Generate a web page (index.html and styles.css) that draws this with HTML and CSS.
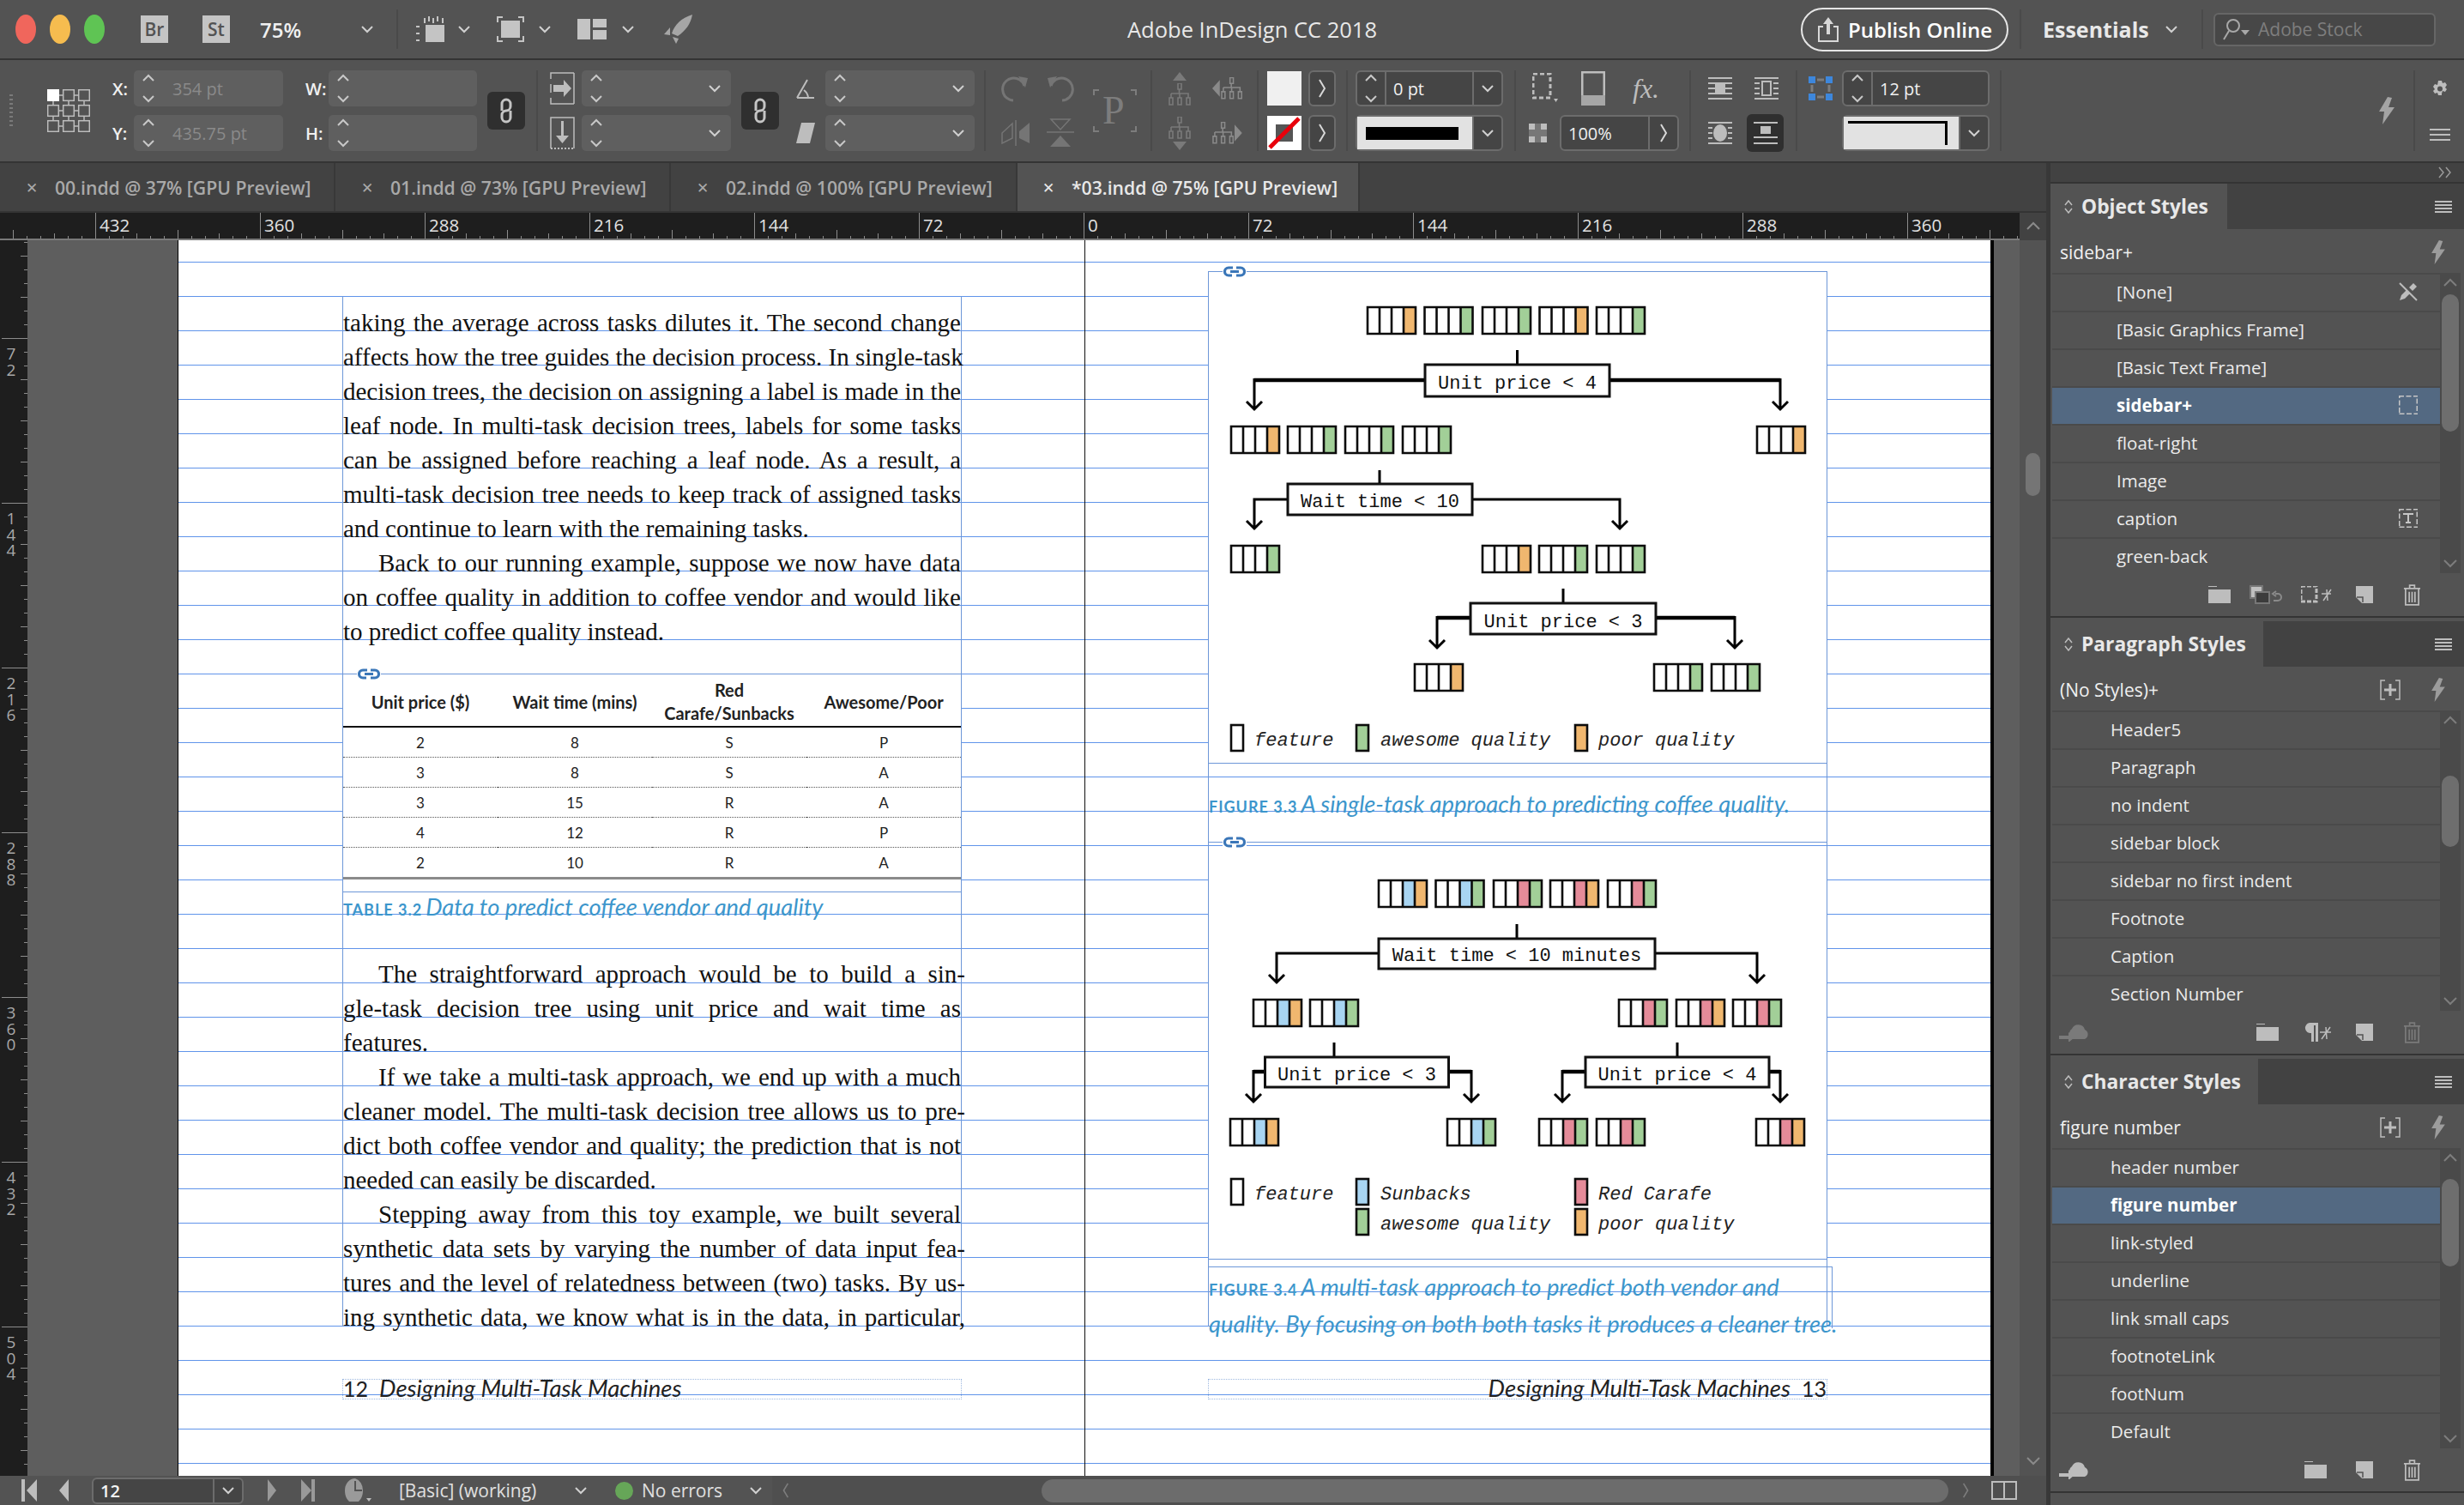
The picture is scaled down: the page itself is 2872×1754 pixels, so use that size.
FILE: index.html
```html
<!DOCTYPE html>
<html>
<head>
<title>Adobe InDesign CC 2018</title>
<link rel="stylesheet" href="styles.css">
</head>
<body>

<svg class="defs" xmlns="http://www.w3.org/2000/svg">
  <defs>
    <symbol id="chev" viewBox="0 0 14 9"><path d="M1 1l6 6 6-6" fill="none" stroke="currentColor" stroke-width="2"/></symbol>
    <symbol id="chev-r" viewBox="0 0 9 22"><path d="M1 1l6 10-6 10" fill="none" stroke="currentColor" stroke-width="2"/></symbol>
    <symbol id="spin" viewBox="0 0 16 34"><path d="M2 8l6-6 6 6M2 26l6 6 6-6" fill="none" stroke="currentColor" stroke-width="2"/></symbol>
    <symbol id="bolt" viewBox="0 0 20 32"><path d="M11 0L1 17h6L5 32 19 12h-7l4-11z" fill="currentColor"/></symbol>
    <symbol id="menu" viewBox="0 0 20 14"><path d="M0 1h20M0 5h20M0 9h20M0 13h20" stroke="currentColor" stroke-width="2"/></symbol>
    <symbol id="folder" viewBox="0 0 26 20"><path d="M0 0h10v1H0zM0 4h26v16H0z" fill="currentColor"/></symbol>
    <symbol id="newpg" viewBox="0 0 20 20"><path d="M0 0h20v20H7L0 13z" fill="currentColor"/><path d="M1 13h7v6" fill="none" stroke="#535353" stroke-width="1.5"/></symbol>
    <symbol id="trash" viewBox="0 0 22 26"><path d="M1 5h20M8 4V1h6v3M3 6v19h16V6M7.500 9v13M11 9v13M14.500 9v13" fill="none" stroke="currentColor" stroke-width="1.800"/></symbol>
    <symbol id="cloud" viewBox="0 0 36 22"><path d="M14 18a7 7 0 0 1 1-11 8 8 0 0 1 15 1 6 6 0 0 1 0 11H14z" fill="currentColor"/><path d="M0 15h11v-4l7 6-7 6v-4H0z" fill="currentColor"/></symbol>
    <symbol id="plusbox" viewBox="0 0 24 24"><path d="M6 1H1v22h5M18 1h5v22h-5" fill="none" stroke="currentColor" stroke-width="1.500"/><path d="M12 5v14M5 12h14" stroke="currentColor" stroke-width="3"/></symbol>
    <symbol id="chain" viewBox="0 0 18 30"><path d="M4 15V7a5 5 0 0 1 10 0v3a5 5 0 0 1-5 5M14 15v8a5 5 0 0 1-10 0v-3a5 5 0 0 1 5-5" fill="none" stroke="currentColor" stroke-width="3"/></symbol>
    <symbol id="org" viewBox="0 0 26 26"><path d="M11 0h4v7h-4zM12.500 7v5M3 12h20v5M3 12v5M13 12v5M1 17h4v8H1zM11 17h4v8h-4zM21 17h4v8h-4z" fill="none" stroke="currentColor" stroke-width="1.600"/></symbol>
    <g id="cells"><path d="M0 0h56v31H0zM14 0v31M28 0v31M42 0v31" fill="none" stroke="#0c0c0c" stroke-width="2.600"/></g>
    <g id="r-o"><rect class="c-w" width="56" height="31"/><rect class="c-o" x="42" width="14" height="31"/><use href="#cells"/></g>
    <g id="r-g"><rect class="c-w" width="56" height="31"/><rect class="c-g" x="42" width="14" height="31"/><use href="#cells"/></g>
    <g id="r-bo"><rect class="c-w" width="56" height="31"/><rect class="c-b" x="28" width="14" height="31"/><rect class="c-o" x="42" width="14" height="31"/><use href="#cells"/></g>
    <g id="r-bg"><rect class="c-w" width="56" height="31"/><rect class="c-b" x="28" width="14" height="31"/><rect class="c-g" x="42" width="14" height="31"/><use href="#cells"/></g>
    <g id="r-ro"><rect class="c-w" width="56" height="31"/><rect class="c-r" x="28" width="14" height="31"/><rect class="c-o" x="42" width="14" height="31"/><use href="#cells"/></g>
    <g id="r-rg"><rect class="c-w" width="56" height="31"/><rect class="c-r" x="28" width="14" height="31"/><rect class="c-g" x="42" width="14" height="31"/><use href="#cells"/></g>
    <symbol id="anchor" viewBox="0 0 28 13"><path d="M12 2H7a4.500 4.500 0 0 0 0 9h4M16 2h5a4.500 4.500 0 0 1 0 9h-5M9 6.500h10" fill="none" stroke="#3a76b8" stroke-width="3.200"/></symbol>
  </defs>
</svg>

<div class="app">

  <!-- title bar -->
  <header class="titlebar">
    <span class="light red"></span><span class="light yellow"></span><span class="light green"></span>
    <span class="appbox br">Br</span>
    <span class="appbox st">St</span>
    <span class="zoom">75%</span>
    <svg class="ico-chev zoom-chev"><use href="#chev"/></svg>
    <span class="tsep"></span>
    <svg class="tb-ico ti-a" width="34" height="30" viewBox="0 0 34 30"><path d="M10 8V2M15 6V0M20 8V2M25 6V0M31 8V2M0 12h4M0 20h4M0 28h4" stroke="#c4c4c4" stroke-width="2"/><rect x="11" y="10" width="22" height="20" fill="#c4c4c4"/></svg>
    <svg class="ico-chev ch-a"><use href="#chev"/></svg>
    <svg class="tb-ico ti-b" width="32" height="30" viewBox="0 0 32 30"><path d="M1 7V1h6M25 1h6v6M1 23v6h6M25 29h6v-6" fill="none" stroke="#c4c4c4" stroke-width="2"/><rect x="5" y="5" width="22" height="20" fill="#c4c4c4"/></svg>
    <svg class="ico-chev ch-b"><use href="#chev"/></svg>
    <svg class="tb-ico ti-c" width="34" height="24" viewBox="0 0 34 24"><path d="M0 0h15v24H0zM18 0h16v10H18zM18 13h16v11H18z" fill="#c4c4c4"/></svg>
    <svg class="ico-chev ch-c"><use href="#chev"/></svg>
    <svg class="tb-ico ti-d" width="34" height="34" viewBox="0 0 34 34"><path d="M33 0C20 4 12 12 9 22l7 3c9-6 15-14 17-25zM7 15L0 23l7 1zM10 26l7 2-3 6z" fill="#a6a6a6"/></svg>
    <div class="apptitle">Adobe InDesign CC 2018</div>
    <button class="publish"><svg width="26" height="30" viewBox="0 0 26 30"><path d="M7 12H2v17h22V12h-5" fill="none" stroke="#d8d8d8" stroke-width="2"/><path d="M13 1l-6 8h4v12h4V9h4z" fill="#d8d8d8"/></svg>Publish Online</button>
    <span class="tsep tsep-p"></span>
    <span class="workspace">Essentials</span>
    <svg class="ico-chev ch-w"><use href="#chev"/></svg>
    <span class="tsep tsep-s"></span>
    <div class="stock"><svg width="32" height="26" viewBox="0 0 32 26"><circle cx="13" cy="9" r="7" fill="none" stroke="#a8a8a8" stroke-width="2"/><path d="M8 15L2 25" stroke="#a8a8a8" stroke-width="2"/><path d="M22 14h10l-5 6z" fill="#a8a8a8"/></svg>Adobe Stock</div>
  </header>

  <!-- control panel -->
  <section class="controls">
    <span class="grip"></span>
    <svg class="refpoint" width="50" height="50" viewBox="0 0 50 50">
      <path d="M14 7h4M32 7h4M14 25h4M32 25h4M14 43h4M32 43h4M7 13v6M25 13v6M43 13v6M7 31v6M25 31v6M43 31v6" stroke="#bdbdbd" stroke-width="1.500"/>
      <g fill="none" stroke="#bdbdbd" stroke-width="1.500">
        <rect x="18.700" y="0.700" width="12.600" height="12.600"/><rect x="36.700" y="0.700" width="12.600" height="12.600"/>
        <rect x="0.700" y="18.700" width="12.600" height="12.600"/><rect x="18.700" y="18.700" width="12.600" height="12.600"/><rect x="36.700" y="18.700" width="12.600" height="12.600"/>
        <rect x="0.700" y="36.700" width="12.600" height="12.600"/><rect x="18.700" y="36.700" width="12.600" height="12.600"/><rect x="36.700" y="36.700" width="12.600" height="12.600"/>
      </g>
      <rect width="14" height="14" fill="#fff"/>
    </svg>

    <div class="tg tg-xy">
      <span class="lbl">X:</span>
      <div class="field"><svg class="spin"><use href="#spin"/></svg><span>354 pt</span></div>
      <span class="lbl lbl-w">W:</span>
      <div class="field"><svg class="spin"><use href="#spin"/></svg></div>
      <span class="lbl">Y:</span>
      <div class="field"><svg class="spin"><use href="#spin"/></svg><span>435.75 pt</span></div>
      <span class="lbl lbl-w">H:</span>
      <div class="field"><svg class="spin"><use href="#spin"/></svg></div>
    </div>
    <div class="linkbtn lb-1"><svg width="18" height="30"><use href="#chain"/></svg></div>
    <span class="csep cs-1"></span>

    <div class="tg tg-scale">
      <svg width="29" height="38" viewBox="0 0 29 38"><path d="M1 8V1h27v36H1V30M1 14v10" fill="none" stroke="#bdbdbd" stroke-width="1.500" stroke-dasharray="2 0"/><path d="M4 15h12v-6l9 10-9 10v-6H4z" fill="#bdbdbd"/></svg>
      <div class="field"><svg class="spin"><use href="#spin"/></svg><svg class="ico-chev f-chev"><use href="#chev"/></svg></div>
      <svg width="29" height="38" viewBox="0 0 29 38"><path d="M1 37V1h27v36" fill="none" stroke="#bdbdbd" stroke-width="1.500"/><path d="M1 37h27" stroke="#bdbdbd" stroke-width="2" stroke-dasharray="2 2"/><path d="M13 5h3v17h6l-7.500 9L7 22h6z" fill="#bdbdbd"/></svg>
      <div class="field"><svg class="spin"><use href="#spin"/></svg><svg class="ico-chev f-chev"><use href="#chev"/></svg></div>
    </div>
    <div class="linkbtn lb-2"><svg width="18" height="30"><use href="#chain"/></svg></div>

    <div class="tg tg-shear">
      <svg width="22" height="24" viewBox="0 0 22 24"><path d="M1 23L13 2M1 23h20M14 23a12 12 0 0 0-5-9" fill="none" stroke="#bdbdbd" stroke-width="2"/></svg>
      <div class="field"><svg class="spin"><use href="#spin"/></svg><svg class="ico-chev f-chev"><use href="#chev"/></svg></div>
      <svg width="22" height="24" viewBox="0 0 22 24"><path d="M6 0h16l-6 24H0z" fill="#bdbdbd"/></svg>
      <div class="field"><svg class="spin"><use href="#spin"/></svg><svg class="ico-chev f-chev"><use href="#chev"/></svg></div>
    </div>
    <span class="csep cs-2"></span>

    <div class="tg tg-rot">
      <svg width="32" height="32" viewBox="0 0 32 32"><path d="M27 13a13 13 0 1 0-13 17" fill="none" stroke="#757575" stroke-width="3" stroke-dasharray="26 0"/><path d="M20 2l11 2-3 11z" fill="#757575"/></svg>
      <svg width="32" height="32" viewBox="0 0 32 32"><path d="M5 13a13 13 0 1 1 13 17" fill="none" stroke="#757575" stroke-width="3"/><path d="M12 2L1 4l3 11z" fill="#757575"/></svg>
      <svg width="34" height="32" viewBox="0 0 34 32"><path d="M13 5L1 16v12l12-6zM17 1v30" fill="none" stroke="#757575" stroke-width="1.500"/><path d="M21 22l12 6V4L21 14z" fill="#757575"/></svg>
      <svg width="32" height="34" viewBox="0 0 32 34"><path d="M5 1h22L16 13zM0 16h32" fill="none" stroke="#757575" stroke-width="1.500"/><path d="M4 33h24L16 20z" fill="#757575"/></svg>
    </div>
    <div class="proxy">
      <svg width="51" height="50" viewBox="0 0 51 50"><path d="M1 7V1h6M44 1h6v6M1 43v6h6M44 49h6v-6" fill="none" stroke="#7d7d7d" stroke-width="2"/></svg>
      <span class="proxy-p">P</span>
    </div>
    <span class="csep cs-3"></span>

    <div class="tg tg-align">
      <div class="stack"><svg width="16" height="10" viewBox="0 0 16 10"><path d="M8 0l8 10H0z" fill="#7a7a7a"/></svg><svg width="26" height="26"><use href="#org"/></svg></div>
      <div class="stack-h"><svg width="9" height="20" viewBox="0 0 9 20"><path d="M9 0v20L0 10z" fill="#8a8a8a"/></svg><svg width="26" height="26"><use href="#org"/></svg></div>
      <div class="stack"><svg width="26" height="26"><use href="#org"/></svg><svg width="16" height="10" viewBox="0 0 16 10"><path d="M8 10L0 0h16z" fill="#7a7a7a"/></svg></div>
      <div class="stack-h"><svg width="26" height="26"><use href="#org"/></svg><svg width="9" height="20" viewBox="0 0 9 20"><path d="M0 0v20l9-10z" fill="#8a8a8a"/></svg></div>
    </div>
    <span class="csep cs-4"></span>

    <div class="tg tg-swatch">
      <span class="swatch fillsw"></span>
      <span class="arrowbtn"><svg width="9" height="22"><use href="#chev-r"/></svg></span>
      <span class="swatch strokesw"><svg width="40" height="40" viewBox="0 0 40 40"><rect x="10" y="10" width="20" height="20" fill="#555"/><path d="M3 37L37 3" stroke="#e8000b" stroke-width="5"/></svg></span>
      <span class="arrowbtn"><svg width="9" height="22"><use href="#chev-r"/></svg></span>
    </div>
    <span class="csep cs-5"></span>

    <div class="tg tg-stroke">
      <div class="bfield"><span class="spincell"><svg class="spin"><use href="#spin"/></svg></span><span class="bval">0 pt</span><span class="dropcell"><svg class="ico-chev"><use href="#chev"/></svg></span></div>
      <div class="bfield light-f"><span class="bval"><i class="weightbar"></i></span><span class="dropcell"><svg class="ico-chev"><use href="#chev"/></svg></span></div>
    </div>
    <span class="csep cs-6"></span>

    <div class="tg tg-fx">
      <div class="fx-icons">
        <svg width="30" height="36" viewBox="0 0 30 36"><path d="M1 1h20v28H1z" fill="none" stroke="#bdbdbd" stroke-width="3" stroke-dasharray="5 3"/><path d="M25 30h5l-2.500 4z" fill="#bdbdbd"/></svg>
        <svg width="28" height="40" viewBox="0 0 28 40"><rect x="1" y="1" width="26" height="30" fill="none" stroke="#bdbdbd" stroke-width="3"/><rect y="28" width="28" height="12" fill="#a6a6a6"/></svg>
        <span class="fx">fx.</span>
      </div>
      <svg width="21" height="22" viewBox="0 0 21 22"><path d="M0 0h21v22H0z" fill="#bdbdbd"/><path d="M7 0h7v7h7v8h-7v7H7v-7H0V7h7z" fill="#777"/></svg>
      <div class="bfield"><span class="bval">100%</span><span class="dropcell"><svg width="9" height="22"><use href="#chev-r"/></svg></span></div>
    </div>
    <span class="csep cs-7"></span>

    <div class="tg tg-wrap">
      <svg width="28" height="26" viewBox="0 0 28 26"><path d="M0 1h28M0 7h28M0 19h28M0 25h28M0 13h28" stroke="#bdbdbd" stroke-width="2"/><rect x="8" y="8" width="12" height="10" fill="#bdbdbd"/></svg>
      <svg width="28" height="26" viewBox="0 0 28 26"><path d="M0 1h28M0 25h28M0 7h6M22 7h6M0 13h6M22 13h6M0 19h6M22 19h6" stroke="#bdbdbd" stroke-width="2"/><rect x="9" y="5" width="10" height="16" fill="none" stroke="#bdbdbd" stroke-width="2"/></svg>
      <svg width="28" height="26" viewBox="0 0 28 26"><path d="M0 1h28M0 25h28M0 7h5M23 7h5M0 13h5M23 13h5M0 19h5M23 19h5" stroke="#bdbdbd" stroke-width="2"/><ellipse cx="14" cy="13" rx="8" ry="10" fill="#bdbdbd"/></svg>
      <span class="wrap-active"><svg width="28" height="26" viewBox="0 0 28 26"><path d="M0 1h28M0 18h28M0 25h28" stroke="#bdbdbd" stroke-width="2"/><rect x="8" y="5" width="12" height="9" fill="#bdbdbd"/></svg></span>
    </div>
    <span class="csep cs-8"></span>

    <div class="tg tg-last">
      <svg width="28" height="28" viewBox="0 0 28 28"><path d="M0 0h8v8H0zM20 0h8v8h-8zM0 20h8v8H0zM20 20h8v8h-8z" fill="#3d87dc"/><path d="M10 4h8M10 24h8M4 10v8M24 10v8" stroke="#7d7d7d" stroke-width="3"/></svg>
      <div class="bfield"><span class="spincell"><svg class="spin"><use href="#spin"/></svg></span><span class="bval">12 pt</span></div>
      <span></span>
      <div class="bfield light-f"><span class="bval"><i class="cornerline"></i></span><span class="dropcell"><svg class="ico-chev"><use href="#chev"/></svg></span></div>
    </div>
    <span class="csep cs-9"></span>

    <svg class="boltbig" width="22" height="32"><use href="#bolt"/></svg>
    <span class="csep cs-10"></span>
    <div class="gearcol">
      <svg width="20" height="20" viewBox="0 0 20 20"><path d="M8 0h4l1 3 3-1 2 3-2 3 2 2-2 3-3-1-1 3-.0 2H8l-1-3-3 1-2-3 2-2-2-3 2-3 3 1z" fill="#bdbdbd"/><circle cx="10" cy="9.500" r="3" fill="#535353"/></svg>
      <svg width="24" height="14" viewBox="0 0 24 14"><path d="M0 1h24M0 7h24M0 13h24" stroke="#bdbdbd" stroke-width="2"/></svg>
    </div>
  </section>

  <div class="main">
    <div class="docs">
      <nav class="tabs">
        <div class="tab t0"><span class="x">✕</span>00.indd @ 37% [GPU Preview]</div>
        <div class="tab t1"><span class="x">✕</span>01.indd @ 73% [GPU Preview]</div>
        <div class="tab t2"><span class="x">✕</span>02.indd @ 100% [GPU Preview]</div>
        <div class="tab active"><span class="x">✕</span>*03.indd @ 75% [GPU Preview]</div>
      </nav>

      <div class="hruler-row">
        <div class="hruler">
          <span>432</span><span>360</span><span>288</span><span>216</span><span>144</span><span>72</span><span>0</span><span>72</span><span>144</span><span>216</span><span>288</span><span>360</span>
        </div>
        <div class="ruler-end"><svg width="16" height="10" viewBox="0 0 16 10"><path d="M1 9l7-7 7 7" fill="none" stroke="#8a8a8a" stroke-width="2"/></svg></div>
      </div>

      <div class="canvas">
        <div class="vruler">
          <div class="vmark"><span>72</span></div>
          <div class="vmark"><span>144</span></div>
          <div class="vmark"><span>216</span></div>
          <div class="vmark"><span>288</span></div>
          <div class="vmark"><span>360</span></div>
          <div class="vmark"><span>432</span></div>
          <div class="vmark"><span>504</span></div>
        </div>
        <div class="pasteboard">
          <div class="page">
            <div class="spine"></div>

            <!-- left page -->
            <div class="frame col-l">
              <div class="ln">taking the average across tasks dilutes it. The second change</div>
              <div class="ln">affects how the tree guides the decision process. In single-task</div>
              <div class="ln">decision trees, the decision on assigning a label is made in the</div>
              <div class="ln">leaf node. In multi-task decision trees, labels for some tasks</div>
              <div class="ln">can be assigned before reaching a leaf node. As a result, a</div>
              <div class="ln">multi-task decision tree needs to keep track of assigned tasks</div>
              <div class="ln end">and continue to learn with the remaining tasks.</div>
              <div class="ln ind">Back to our running example, suppose we now have data</div>
              <div class="ln">on coffee quality in addition to coffee vendor and would like</div>
              <div class="ln end">to predict coffee quality instead.</div>

              <div class="tbl-frame">
                <svg class="anchor a-t"><use href="#anchor"/></svg>
                <table class="data">
                  <thead>
                    <tr><th>Unit price ($)</th><th>Wait time (mins)</th><th>Red<br>Carafe/Sunbacks</th><th>Awesome/Poor</th></tr>
                  </thead>
                  <tbody>
                    <tr><td>2</td><td>8</td><td>S</td><td>P</td></tr>
                    <tr><td>3</td><td>8</td><td>S</td><td>A</td></tr>
                    <tr><td>3</td><td>15</td><td>R</td><td>A</td></tr>
                    <tr><td>4</td><td>12</td><td>R</td><td>P</td></tr>
                    <tr><td>2</td><td>10</td><td>R</td><td>A</td></tr>
                  </tbody>
                </table>
              </div>
              <div class="tbl-cap"><b>Table 3.2</b> <i>Data to predict coffee vendor and quality</i></div>

              <div class="ln hang ind">The straightforward approach would be to build a sin-</div>
              <div class="ln">gle-task decision tree using unit price and wait time as</div>
              <div class="ln end">features.</div>
              <div class="ln ind">If we take a multi-task approach, we end up with a much</div>
              <div class="ln hang">cleaner model. The multi-task decision tree allows us to pre-</div>
              <div class="ln">dict both coffee vendor and quality; the prediction that is not</div>
              <div class="ln end">needed can easily be discarded.</div>
              <div class="ln ind">Stepping away from this toy example, we built several</div>
              <div class="ln hang">synthetic data sets by varying the number of data input fea-</div>
              <div class="ln hang">tures and the level of relatedness between (two) tasks. By us-</div>
              <div class="ln hang">ing synthetic data, we know what is in the data, in particular,</div>
            </div>

            <div class="runfoot rf-l"><span class="pnum">12</span><i>Designing Multi-Task Machines</i></div>

            <!-- right page -->
            <div class="frame col-r">
              <div class="fig fig-1">
                <svg class="anchor a-f"><use href="#anchor"/></svg>
                <svg class="tree" width="720" height="572" viewBox="1409 317 720 572">
                  <use href="#r-o" x="1594" y="358"/><use href="#r-g" x="1660.500" y="358"/><use href="#r-g" x="1728" y="358"/><use href="#r-o" x="1794.500" y="358"/><use href="#r-g" x="1861" y="358"/>
                  <path class="edge" d="M1768.500 408v17"/>
                  <path class="edge thick" d="M1661 443H1462M1876 443H2075"/>
                  <path class="edge" d="M1462 441V477M1453 468l9 9 9-9M2075 441V477M2066 468l9 9 9-9"/>
                  <rect class="node" x="1661" y="425" width="215" height="37"/>
                  <text class="nlabel" x="1768.500" y="453">Unit price &lt; 4</text>

                  <use href="#r-o" x="1435" y="497"/><use href="#r-g" x="1501" y="497"/><use href="#r-g" x="1568" y="497"/><use href="#r-g" x="1635" y="497"/>
                  <use href="#r-o" x="2048" y="497"/>
                  <path class="edge" d="M1608 548v16"/>
                  <path class="edge" d="M1501 582H1462V616M1453 607l9 9 9-9M1716 582H1888V616M1879 607l9 9 9-9"/>
                  <rect class="node" x="1501" y="564" width="215" height="36"/>
                  <text class="nlabel" x="1608.500" y="591">Wait time &lt; 10</text>

                  <use href="#r-g" x="1435" y="636"/>
                  <use href="#r-o" x="1728" y="636"/><use href="#r-g" x="1794" y="636"/><use href="#r-g" x="1861" y="636"/>
                  <path class="edge" d="M1822 686v17"/>
                  <path class="edge thick" d="M1714 720H1675M1930 720H2022"/>
                  <path class="edge" d="M1675 718V755M1666 746l9 9 9-9M2022 718V755M2013 746l9 9 9-9"/>
                  <rect class="node" x="1714" y="703" width="216" height="36"/>
                  <text class="nlabel" x="1822" y="731">Unit price &lt; 3</text>

                  <use href="#r-o" x="1649" y="774"/><use href="#r-g" x="1928" y="774"/><use href="#r-g" x="1995" y="774"/>

                  <rect class="sw c-w" x="1435" y="845" width="14" height="30"/><text class="legend" x="1462" y="869">feature</text>
                  <rect class="sw c-g" x="1581" y="845" width="14" height="30"/><text class="legend" x="1609" y="869">awesome quality</text>
                  <rect class="sw c-o" x="1836" y="845" width="14" height="30"/><text class="legend" x="1863" y="869">poor quality</text>
                </svg>
              </div>
              <div class="fig-cap cap-1"><b>Figure 3.3</b> <i>A single-task approach to predicting coffee quality.</i></div>
              <div class="fig fig-2">
                <svg class="anchor a-f"><use href="#anchor"/></svg>
                <svg class="tree" width="720" height="485" viewBox="1409 981 720 485">
                  <use href="#r-bo" x="1607" y="1025"/><use href="#r-bg" x="1673.500" y="1025"/><use href="#r-rg" x="1741" y="1025"/><use href="#r-ro" x="1807" y="1025"/><use href="#r-rg" x="1874" y="1025"/>
                  <path class="edge" d="M1768 1076v17"/>
                  <path class="edge" d="M1607 1110H1488V1144M1479 1135l9 9 9-9M1929 1110H2048V1144M2039 1135l9 9 9-9"/>
                  <rect class="node" x="1607" y="1093" width="322" height="35"/>
                  <text class="nlabel" x="1768" y="1119">Wait time &lt; 10 minutes</text>

                  <use href="#r-bo" x="1461" y="1164"/><use href="#r-bg" x="1527" y="1164"/>
                  <use href="#r-rg" x="1887" y="1164"/><use href="#r-ro" x="1954" y="1164"/><use href="#r-rg" x="2020" y="1164"/>

                  <path class="edge" d="M1555 1214v17M1955 1214v17"/>
                  <path class="edge thick" d="M1474 1248H1461M1689 1248H1715M1848 1248H1821M2062 1248H2075"/>
                  <path class="edge" d="M1461 1246V1283M1452 1274l9 9 9-9M1715 1246V1283M1706 1274l9 9 9-9M1821 1246V1283M1812 1274l9 9 9-9M2075 1246V1283M2066 1274l9 9 9-9"/>
                  <rect class="node" x="1474.500" y="1231" width="214" height="35"/>
                  <text class="nlabel" x="1581.500" y="1258">Unit price &lt; 3</text>
                  <rect class="node" x="1848" y="1231" width="214" height="35"/>
                  <text class="nlabel" x="1955" y="1258">Unit price &lt; 4</text>

                  <use href="#r-bo" x="1434" y="1303"/><use href="#r-bg" x="1687" y="1303"/><use href="#r-rg" x="1794" y="1303"/><use href="#r-rg" x="1861" y="1303"/><use href="#r-ro" x="2047" y="1303"/>

                  <rect class="sw c-w" x="1435" y="1373" width="14" height="30"/><text class="legend" x="1462" y="1397">feature</text>
                  <rect class="sw c-b" x="1581" y="1373" width="14" height="30"/><text class="legend" x="1609" y="1397">Sunbacks</text>
                  <rect class="sw c-r" x="1836" y="1373" width="14" height="30"/><text class="legend" x="1863" y="1397">Red Carafe</text>
                  <rect class="sw c-g" x="1581" y="1408" width="14" height="30"/><text class="legend" x="1609" y="1432">awesome quality</text>
                  <rect class="sw c-o" x="1836" y="1408" width="14" height="30"/><text class="legend" x="1863" y="1432">poor quality</text>
                </svg>
              </div>
              <div class="fig-cap cap-2"><b>Figure 3.4</b> <i>A multi-task approach to predict both vendor and<br>quality. By focusing on both both tasks it produces a cleaner tree.</i></div>
            </div>

            <div class="runfoot rf-r"><i>Designing Multi-Task Machines</i><span class="pnum pnum-r">13</span></div>
          </div>
        </div>
        <div class="vscroll">
          <span class="vthumb"></span>
          <svg width="16" height="10" viewBox="0 0 16 10"><path d="M1 1l7 7 7-7" fill="none" stroke="#8a8a8a" stroke-width="2"/></svg>
        </div>
      </div>

      <!-- status bar -->
      <footer class="status">
        <svg class="st-1" width="18" height="26" viewBox="0 0 18 26"><path d="M0 0h4v26H0zM18 0v26L6 13z" fill="#bdbdbd"/></svg>
        <svg class="st-2" width="11" height="26" viewBox="0 0 11 26"><path d="M11 0v26L0 13z" fill="#bdbdbd"/></svg>
        <div class="pagefield"><span>12</span><span class="pf-drop"><svg class="ico-chev"><use href="#chev"/></svg></span></div>
        <svg class="st-3" width="10" height="26" viewBox="0 0 10 26"><path d="M0 0v26l10-13z" fill="#999"/></svg>
        <svg class="st-4" width="16" height="26" viewBox="0 0 16 26"><path d="M0 0v26l12-13zM12 0h4v26h-4z" fill="#999"/></svg>
        <svg class="st-5" width="34" height="28" viewBox="0 0 34 28"><path d="M14 0a12 14 0 0 0-12 14c0 6 2 10 5 13h11c3-3 5-7 5-13A12 14 0 0 0 14 0z" fill="#9a9a9a"/><path d="M14 3v11h8" fill="none" stroke="#535353" stroke-width="2"/><path d="M27 23h6l-3 4z" fill="#bdbdbd"/></svg>
        <span class="profile">[Basic] (working)</span>
        <svg class="ico-chev st-6"><use href="#chev"/></svg>
        <span class="okdot"></span>
        <span class="errs">No errors</span>
        <svg class="ico-chev st-7"><use href="#chev"/></svg>
        <div class="hscroll">
          <svg width="9" height="18" viewBox="0 0 9 22"><path d="M8 1L2 11l6 10" fill="none" stroke="#7d7d7d" stroke-width="2"/></svg>
          <span class="hthumb"></span>
          <svg width="9" height="18" viewBox="0 0 9 22"><path d="M1 1l6 10-6 10" fill="none" stroke="#7d7d7d" stroke-width="2"/></svg>
          <svg class="splitbox" width="30" height="22" viewBox="0 0 30 22"><path d="M1 1h28v20H1zM15 1v20" fill="none" stroke="#bdbdbd" stroke-width="2"/></svg>
        </div>
      </footer>
    </div>

    <!-- panel dock -->
    <aside class="panels">
      <div class="dock-top"><svg width="16" height="14" viewBox="0 0 16 14"><path d="M1 1l5 6-5 6M9 1l5 6-5 6" fill="none" stroke="#9a9a9a" stroke-width="1.500"/></svg></div>

      <section class="panel">
        <div class="phead"><div class="ptab pt-obj"><svg class="updown" width="10" height="16" viewBox="0 0 10 16"><path d="M1 6l4-5 4 5M1 10l4 5 4-5" fill="none" stroke="#bdbdbd" stroke-width="1.500"/></svg>Object Styles</div><svg class="pmenu" width="20" height="14"><use href="#menu"/></svg></div>
        <div class="psub"><span>sidebar+</span><svg class="pbolt" width="18" height="28"><use href="#bolt"/></svg></div>
        <div class="plist">
          <div class="rows rows-obj">
            <div class="row">[None]<svg width="22" height="22" viewBox="0 0 22 22"><path d="M1 1l20 20" stroke="#bdbdbd" stroke-width="2"/><path d="M17 1l4 4-5 5-4-4zM9 9l4 4-6 6-6 2 2-6z" fill="#bdbdbd"/></svg></div>
            <div class="row">[Basic Graphics Frame]</div>
            <div class="row">[Basic Text Frame]</div>
            <div class="row sel">sidebar+<svg width="22" height="22" viewBox="0 0 22 22"><path d="M0 0h22v22H0z" fill="none" stroke="#c6c6c6" stroke-width="3" stroke-dasharray="6 2.500"/></svg></div>
            <div class="row">float-right</div>
            <div class="row">Image</div>
            <div class="row">caption<svg width="22" height="22" viewBox="0 0 22 22"><path d="M0 0h22v22H0z" fill="none" stroke="#c6c6c6" stroke-width="3" stroke-dasharray="6 2.500"/><path d="M6 7V6h10v1M11 6v10M8 16h6" fill="none" stroke="#c6c6c6" stroke-width="2"/></svg></div>
            <div class="row">green-back</div>
          </div>
          <div class="ptrack">
            <svg width="16" height="10" viewBox="0 0 16 10"><path d="M1 9l7-7 7 7" fill="none" stroke="#7d7d7d" stroke-width="2"/></svg>
            <span class="pthumb th-obj"></span>
            <svg class="track-d" width="16" height="10" viewBox="0 0 16 10"><path d="M1 1l7 7 7-7" fill="none" stroke="#7d7d7d" stroke-width="2"/></svg>
          </div>
        </div>
        <div class="pfoot">
          <svg class="tight" width="26" height="20"><use href="#folder"/></svg>
          <svg class="dim tight" width="38" height="22" viewBox="0 0 38 22"><rect x="1" y="1" width="14" height="14" fill="#c0c0c0" stroke="#777" stroke-width="2"/><rect x="7" y="8" width="16" height="13" fill="#3c3c3c" stroke="#777" stroke-width="2"/><path d="M30 10h3a4 4 0 0 1 0 8h-5M31 7l-4 3 4 3" fill="none" stroke="#8a8a8a" stroke-width="2"/></svg>
          <svg class="wide" width="36" height="20" viewBox="0 0 36 20"><path d="M0 0h18v18H0z" fill="none" stroke="#bdbdbd" stroke-width="3" stroke-dasharray="5 2"/><path d="M26 17l9-13M24 9h11M30 4l1 13" stroke="#bdbdbd" stroke-width="1.500" fill="none"/></svg>
          <svg class="newpg" width="20" height="20"><use href="#newpg"/></svg>
          <svg width="21" height="25"><use href="#trash"/></svg>
        </div>
      </section>

      <section class="panel">
        <div class="phead"><div class="ptab pt-par"><svg class="updown" width="10" height="16" viewBox="0 0 10 16"><path d="M1 6l4-5 4 5M1 10l4 5 4-5" fill="none" stroke="#bdbdbd" stroke-width="1.500"/></svg>Paragraph Styles</div><svg class="pmenu" width="20" height="14"><use href="#menu"/></svg></div>
        <div class="psub"><span>(No Styles)+</span><svg class="pplus" width="24" height="24"><use href="#plusbox"/></svg><svg class="pbolt" width="18" height="28"><use href="#bolt"/></svg></div>
        <div class="plist">
          <div class="rows">
            <div class="row">Header5</div>
            <div class="row">Paragraph</div>
            <div class="row">no indent</div>
            <div class="row">sidebar block</div>
            <div class="row">sidebar no first indent</div>
            <div class="row">Footnote</div>
            <div class="row">Caption</div>
            <div class="row">Section Number</div>
          </div>
          <div class="ptrack">
            <svg width="16" height="10" viewBox="0 0 16 10"><path d="M1 9l7-7 7 7" fill="none" stroke="#7d7d7d" stroke-width="2"/></svg>
            <span class="pthumb th-par"></span>
            <svg class="track-d" width="16" height="10" viewBox="0 0 16 10"><path d="M1 1l7 7 7-7" fill="none" stroke="#7d7d7d" stroke-width="2"/></svg>
          </div>
        </div>
        <div class="pfoot">
          <svg class="cloud dimmer" width="36" height="22"><use href="#cloud"/></svg>
          <svg class="mid" width="26" height="20"><use href="#folder"/></svg>
          <svg class="mid" width="34" height="22" viewBox="0 0 34 22"><path d="M8 0h10v22h-3V3h-2v19h-3V12a6 6 0 0 1-2-12z" fill="#bdbdbd"/><path d="M22 19l10-14M20 11h13M27 5l1 14" stroke="#bdbdbd" stroke-width="1.500" fill="none"/></svg>
          <svg class="newpg" width="20" height="20"><use href="#newpg"/></svg>
          <svg class="dimmer" width="21" height="25"><use href="#trash"/></svg>
        </div>
      </section>

      <section class="panel">
        <div class="phead"><div class="ptab pt-chr"><svg class="updown" width="10" height="16" viewBox="0 0 10 16"><path d="M1 6l4-5 4 5M1 10l4 5 4-5" fill="none" stroke="#bdbdbd" stroke-width="1.500"/></svg>Character Styles</div><svg class="pmenu" width="20" height="14"><use href="#menu"/></svg></div>
        <div class="psub"><span>figure number</span><svg class="pplus" width="24" height="24"><use href="#plusbox"/></svg><svg class="pbolt" width="18" height="28"><use href="#bolt"/></svg></div>
        <div class="plist">
          <div class="rows">
            <div class="row">header number</div>
            <div class="row sel">figure number</div>
            <div class="row">link-styled</div>
            <div class="row">underline</div>
            <div class="row">link small caps</div>
            <div class="row">footnoteLink</div>
            <div class="row">footNum</div>
            <div class="row">Default</div>
          </div>
          <div class="ptrack">
            <svg width="16" height="10" viewBox="0 0 16 10"><path d="M1 9l7-7 7 7" fill="none" stroke="#7d7d7d" stroke-width="2"/></svg>
            <span class="pthumb th-chr"></span>
            <svg class="track-d" width="16" height="10" viewBox="0 0 16 10"><path d="M1 1l7 7 7-7" fill="none" stroke="#7d7d7d" stroke-width="2"/></svg>
          </div>
        </div>
        <div class="pfoot">
          <svg class="cloud" width="36" height="22"><use href="#cloud"/></svg>
          <svg class="mid mid-w" width="26" height="20"><use href="#folder"/></svg>
          <svg class="newpg" width="20" height="20"><use href="#newpg"/></svg>
          <svg width="21" height="25"><use href="#trash"/></svg>
        </div>
      </section>
    </aside>
  </div>
</div>
</body>
</html>
```

FILE: styles.css
```css
html, body {
    margin: 0;
    height: 100%;
    overflow: hidden;
    background: #535353;
}

body {
    font-family: "Open Sans", "Liberation Sans", sans-serif;
    color: #e8e8e8;
}

.defs {
    position: absolute;
    width: 0;
    height: 0;
}

.app {
    width: 2872px;
    height: 1754px;
    display: flex;
    flex-direction: column;
}

/* title bar */
.titlebar {
    height: 68px;
    flex: none;
    display: flex;
    align-items: center;
    padding-left: 18px;
    box-sizing: border-box;
    background: #535353;
}

.light {
    width: 24px;
    height: 34px;
    border-radius: 50%;
    margin-right: 16px;
    flex: none;
}

.red { background: #f0665c; }
.yellow { background: #f6bc4f; }
.green { background: #5fc454; }

.appbox {
    width: 32px;
    height: 32px;
    flex: none;
    background: #c4c4c4;
    color: #535353;
    font-size: 21px;
    font-weight: 600;
    line-height: 32px;
    text-align: center;
}

.br { margin-left: 26px; }
.st { margin-left: 40px; }

.zoom {
    margin-left: 35px;
    width: 118px;
    font-size: 24px;
    font-weight: 600;
    color: #f0f0f0;
}

.ico-chev {
    width: 14px;
    height: 9px;
    flex: none;
    color: #d0d0d0;
}

.tsep {
    width: 2px;
    height: 46px;
    background: #4a4a4a;
    margin-left: 27px;
    flex: none;
}

.ti-a { margin-left: 21px; }
.ch-a { margin-left: 15px; }
.ti-b { margin-left: 31px; }
.ch-b { margin-left: 17px; }
.ti-c { margin-left: 31px; }
.ch-c { margin-left: 18px; }
.ti-d { margin-left: 35px; }

.apptitle {
    margin-left: 506px;
    width: 785px;
    flex: none;
    font-size: 25.500px;
    color: #e8e8e8;
}

.publish {
    width: 242px;
    height: 51px;
    flex: none;
    box-sizing: border-box;
    border: 2px solid #e6e6e6;
    border-radius: 26px;
    background: transparent;
    color: #fff;
    font-family: inherit;
    font-size: 24px;
    font-weight: 600;
    display: flex;
    align-items: center;
    justify-content: center;
    gap: 10px;
    padding: 0;
}

.tsep-p { margin-left: 13px; }

.workspace {
    margin-left: 25px;
    width: 143px;
    font-size: 25px;
    font-weight: 700;
    color: #e8e8e8;
}

.ch-w { margin-left: 0; }
.tsep-s { margin-left: 28px; }

.stock {
    margin-left: 12px;
    width: 259px;
    height: 39px;
    flex: none;
    box-sizing: border-box;
    border: 2px solid #666;
    border-radius: 6px;
    background: #474747;
    display: flex;
    align-items: center;
    gap: 10px;
    padding-left: 8px;
    font-size: 21px;
    color: #7e7e7e;
}

/* control panel */
.controls {
    height: 122px;
    flex: none;
    box-sizing: border-box;
    border-top: 2px solid #343434;
    border-bottom: 2px solid #343434;
    background: #535353;
    display: flex;
    align-items: center;
    padding-left: 11px;
}

.grip {
    width: 4px;
    height: 38px;
    flex: none;
    background: repeating-linear-gradient(#7a7a7a 0 2px, transparent 2px 5px);
}

.refpoint {
    margin-left: 40px;
    flex: none;
}

.tg {
    display: grid;
    grid-template-rows: 42px 42px;
    row-gap: 10px;
    align-items: center;
    flex: none;
}

.tg-xy { margin-left: 26px; grid-template-columns: 25px 174px 53px 173px; }
.tg-scale { margin-left: 14px; grid-template-columns: 37px 174px; }
.tg-shear { margin-left: 20px; grid-template-columns: 34px 174px; }
.tg-rot { margin-left: 18px; grid-template-columns: 53px 32px; }
.tg-align { margin-left: 19px; grid-template-columns: 51px 35px; }
.tg-swatch { margin-left: 10px; grid-template-columns: 48px 32px; }
.tg-stroke { margin-left: 9px; grid-template-columns: 172px; }
.tg-fx { margin-left: 15px; grid-template-columns: 36px 139px; }
.tg-wrap { margin-left: 20px; grid-template-columns: 45px 43px; justify-items: start; }
.tg-wrap svg:nth-child(2) { margin-left: 9px; }
.tg-last { margin-left: 13px; grid-template-columns: 39px 172px; }

.lbl {
    font-size: 20px;
    font-weight: 600;
    color: #f0f0f0;
}

.lbl-w { padding-left: 26px; }

.field {
    height: 42px;
    display: flex;
    align-items: center;
    background: #5f5f5f;
    border-radius: 5px;
    color: #8a8a8a;
    font-size: 20px;
}

.spin {
    width: 16px;
    height: 34px;
    margin: 0 20px 0 9px;
    flex: none;
    color: #c8c8c8;
}

.f-chev { margin-left: auto; margin-right: 12px; }

.linkbtn {
    width: 44px;
    height: 44px;
    flex: none;
    background: #2f2f2f;
    border-radius: 6px;
    display: flex;
    align-items: center;
    justify-content: center;
    color: #c4c4c4;
}

.lb-1 { margin-left: 12px; }
.lb-2 { margin-left: 12px; }

.csep {
    width: 2px;
    height: 94px;
    flex: none;
    background: #4a4a4a;
}

.cs-1 { margin-left: 13px; }
.cs-2 { margin-left: 11px; }
.cs-3 { margin-left: 16px; }
.cs-4 { margin-left: 17px; }
.cs-5 { margin-left: 12px; }
.cs-6 { margin-left: 13px; }
.cs-7 { margin-left: 12px; }
.cs-8 { margin-left: 14px; }
.cs-9 { margin-left: 12px; }
.cs-10 { margin-left: 20px; }

.proxy {
    position: relative;
    width: 51px;
    height: 50px;
    margin-left: 22px;
    flex: none;
}

.proxy-p {
    position: absolute;
    left: 11px;
    top: -2px;
    font-family: "Liberation Serif", serif;
    font-size: 46px;
    color: #7d7d7d;
}

.stack {
    display: flex;
    flex-direction: column;
    align-items: center;
    gap: 3px;
    width: 26px;
    color: #7a7a7a;
}

.stack-h {
    display: flex;
    align-items: center;
    gap: 1px;
    color: #8a8a8a;
}

.swatch {
    width: 40px;
    height: 40px;
    display: block;
}

.fillsw { background: #f0f0f0; }
.strokesw { background: #fff; }

.arrowbtn {
    width: 32px;
    height: 42px;
    box-sizing: border-box;
    border: 2px solid #6c6c6c;
    border-radius: 6px;
    background: #454545;
    display: flex;
    align-items: center;
    justify-content: center;
    color: #d8d8d8;
}

.bfield {
    height: 42px;
    box-sizing: border-box;
    border: 2px solid #6c6c6c;
    border-radius: 6px;
    background: #454545;
    display: flex;
    color: #f0f0f0;
    font-size: 20px;
}

.spincell {
    width: 34px;
    flex: none;
    box-sizing: border-box;
    border-right: 2px solid #6c6c6c;
    display: flex;
    align-items: center;
    justify-content: center;
}

.spincell .spin { margin: 0; }

.bval {
    flex: 1;
    display: flex;
    align-items: center;
    padding-left: 8px;
}

.dropcell {
    width: 34px;
    flex: none;
    box-sizing: border-box;
    border-left: 2px solid #6c6c6c;
    display: flex;
    align-items: center;
    justify-content: center;
    color: #d8d8d8;
}

.light-f .bval { background: #e2e2e2; }

.weightbar {
    display: block;
    width: 108px;
    height: 15px;
    background: #000;
    margin-left: 2px;
}

.cornerline {
    display: block;
    width: 116px;
    height: 28px;
    box-sizing: border-box;
    border-top: 3px solid #000;
    border-right: 3px solid #000;
    margin-left: -3px;
}

.fx-icons {
    grid-column: 1 / 3;
    display: flex;
    align-items: center;
    gap: 27px;
    padding-left: 4px;
}

.fx {
    font-family: "Liberation Serif", serif;
    font-style: italic;
    font-size: 32px;
    color: #bdbdbd;
    margin-left: 5px;
}

.wrap-active {
    width: 43px;
    height: 44px;
    background: #2f2f2f;
    border-radius: 6px;
    display: flex;
    align-items: center;
    justify-content: center;
}

.boltbig {
    margin-left: auto;
    color: #a4a4a4;
    flex: none;
}

.gearcol {
    margin-left: 17px;
    margin-right: 16px;
    height: 70px;
    flex: none;
    display: flex;
    flex-direction: column;
    align-items: center;
    justify-content: space-between;
    width: 24px;
}

/* document area */
.main {
    flex: 1;
    display: flex;
    min-height: 0;
}

.docs {
    width: 2385px;
    flex: none;
    display: flex;
    flex-direction: column;
}

.tabs {
    height: 58px;
    flex: none;
    box-sizing: border-box;
    border-bottom: 2px solid #343434;
    background: #424242;
    display: flex;
}

.tab {
    height: 56px;
    flex: none;
    box-sizing: border-box;
    border-right: 2px solid #383838;
    display: flex;
    align-items: center;
    padding-left: 30px;
    font-size: 21.200px;
    font-weight: 600;
    color: #a9a9a9;
}

.t0, .t1 { width: 391px; }
.t2 { width: 404px; }

.tab.active {
    width: 399px;
    padding-left: 29px;
    background: #535353;
    color: #e8e8e8;
}

.x {
    width: 14px;
    margin-right: 20px;
    font-size: 17px;
    font-weight: 400;
}

.hruler-row {
    height: 32px;
    flex: none;
    display: flex;
}

.hruler {
    width: 2354px;
    flex: none;
    box-sizing: border-box;
    border-bottom: 2px solid #7a7a7a;
    padding-left: 112px;
    display: flex;
    overflow: hidden;
    background-color: #1e1e1e;
    background-image:
        linear-gradient(to right, #8c8c8c 1px, transparent 1px),
        linear-gradient(to right, #8c8c8c 1px, transparent 1px),
        linear-gradient(to right, #8c8c8c 1px, transparent 1px),
        linear-gradient(to right, #8c8c8c 1px, transparent 1px);
    background-size: 192px 30px, 96px 10px, 48px 6px, 16px 3px;
    background-position: 111px bottom, 15px bottom, 15px bottom, 15px bottom;
    background-repeat: repeat-x;
}

.hruler span {
    width: 192px;
    flex: none;
    box-sizing: border-box;
    padding-left: 4px;
    font-size: 20.500px;
    line-height: 28px;
    color: #e2e2e2;
}

.ruler-end {
    flex: 1;
    background: #424242;
    display: flex;
    align-items: center;
    justify-content: center;
    border-bottom: 2px solid #424242;
}

.canvas {
    height: 1440px;
    flex: none;
    display: flex;
}

.vruler {
    width: 32px;
    flex: none;
    box-sizing: border-box;
    padding-top: 116px;
    display: flex;
    flex-direction: column;
    overflow: hidden;
    background-color: #1e1e1e;
    background-image:
        linear-gradient(#8c8c8c 1px, transparent 1px),
        linear-gradient(#8c8c8c 1px, transparent 1px),
        linear-gradient(#8c8c8c 1px, transparent 1px);
    background-size: 30px 192px, 8px 48px, 4px 16px;
    background-position: right 114px, right 18px, right 2px;
    background-repeat: repeat-y;
}

.vmark {
    height: 192px;
    flex: none;
    display: flex;
    padding: 3px 0 0 3px;
    box-sizing: border-box;
}

.vmark span {
    writing-mode: vertical-rl;
    text-orientation: upright;
    font-size: 19px;
    line-height: 20px;
    letter-spacing: -7.500px;
    color: #a8a8a8;
    height: 60px;
}

.pasteboard {
    position: relative;
    width: 2322px;
    flex: none;
    overflow: hidden;
    background: #5e5e5e;
}

.page {
    position: absolute;
    left: 175px;
    top: 0;
    width: 2112px;
    height: 1440px;
    border-left: 1px solid #000;
    border-right: 4px solid #000;
    background-color: #fff;
    background-image: linear-gradient(#6094ea 1px, transparent 1px);
    background-size: 100% 40px;
    background-position: 0 25px;
    font-family: "Liberation Serif", serif;
    color: #111;
}

.spine {
    position: absolute;
    left: 1056px;
    top: 0;
    width: 1px;
    height: 1440px;
    background: #111;
}

.frame {
    position: absolute;
    box-sizing: border-box;
    width: 722px;
    border-left: 1px solid #6d97d8;
    border-right: 1px solid #6d97d8;
}

.col-l {
    left: 191px;
    top: 65px;
    height: 1201px;
    padding-top: 11px;
}

.ln {
    height: 40px;
    font-size: 29px;
    line-height: 40px;
    white-space: nowrap;
    text-align: justify;
    text-align-last: justify;
}

.ln.end { text-align-last: left; }
.ln.ind { text-indent: 41px; }
.ln.hang { margin-right: -5px; }

.tbl-frame {
    position: relative;
    margin-top: 29px;
    height: 242px;
    box-sizing: border-box;
    border-top: 1px solid #6d97d8;
    background: #fff;
}

.anchor {
    position: absolute;
    width: 28px;
    height: 13px;
    background: #fff;
}

.a-t { left: 16px; top: -7px; }
.a-f { left: 16px; top: -7px; }

.data {
    width: 720px;
    border-collapse: collapse;
    table-layout: fixed;
    font-family: Lato, "Liberation Sans", sans-serif;
    color: #222;
    text-align: center;
}

.data th {
    height: 56px;
    padding: 4px 0 0;
    font-size: 20px;
    font-weight: 700;
    line-height: 27px;
    border-bottom: 2px solid #111;
}

.data td {
    height: 34px;
    padding: 0;
    font-size: 17px;
    border-bottom: 1px dotted #555;
}

.data tbody tr:last-child td { border-bottom: 3px solid #8b8b8b; }

.tbl-cap {
    margin-top: 12px;
    height: 76px;
    box-sizing: border-box;
    padding-top: 3px;
    border-top: 1px solid #6d97d8;
    line-height: 28px;
    white-space: nowrap;
}

.tbl-cap, .fig-cap {
    font-family: Lato, "Liberation Sans", sans-serif;
    color: #3c96cc;
}

.tbl-cap b, .fig-cap b {
    font-size: 18px;
    font-weight: 700;
    letter-spacing: 1px;
    text-transform: uppercase;
}

.tbl-cap i, .fig-cap i {
    font-size: 27.300px;
}

.col-r {
    left: 1200px;
    top: 36px;
    height: 1230px;
}

.fig {
    position: relative;
    box-sizing: border-box;
    border-top: 1px solid #6d97d8;
    border-bottom: 1px solid #6d97d8;
}

.fig-1 {
    height: 574px;
    background: #fff;
}

.fig-2 {
    height: 487px;
    background: linear-gradient(transparent 6px, #fff 6px);
}

.tree {
    display: block;
}

.edge {
    fill: none;
    stroke: #000;
    stroke-width: 3;
}

.edge.thick { stroke-width: 4.500; }

.node {
    fill: #fff;
    stroke: #111;
    stroke-width: 3;
}

.nlabel {
    font-family: "Liberation Mono", monospace;
    font-size: 22px;
    text-anchor: middle;
    fill: #111;
}

.legend {
    font-family: "Liberation Mono", monospace;
    font-size: 22px;
    font-style: italic;
    fill: #222;
}

.sw {
    stroke: #0c0c0c;
    stroke-width: 2.600;
}

.c-w { fill: #fff; }
.c-o { fill: #f0b76f; }
.c-g { fill: #a2cf98; }
.c-b { fill: #a8d5f2; }
.c-r { fill: #e58b99; }

.fig-cap {
    white-space: nowrap;
    line-height: 39px;
}

.cap-1 {
    height: 91px;
    box-sizing: border-box;
    padding-top: 27px;
}

.cap-2 {
    width: 727px;
    height: 72px;
    margin-top: 8px;
    box-sizing: border-box;
    padding-top: 3px;
    border-top: 1px solid #6d97d8;
    border-right: 1px solid #6d97d8;
}

.runfoot {
    position: absolute;
    top: 1327px;
    width: 722px;
    height: 24px;
    box-sizing: border-box;
    border: 1px dotted #9db8e0;
    display: flex;
    font-family: Lato, "Liberation Sans", sans-serif;
    font-size: 27.500px;
    line-height: 20px;
    white-space: nowrap;
    color: #222;
}

.rf-l { left: 191px; }
.rf-r { left: 1200px; justify-content: flex-end; }
.pnum { margin-right: 13px; font-size: 25px; }
.pnum-r { margin: 0 0 0 13px; }

.vscroll {
    flex: 1;
    position: relative;
    display: flex;
    flex-direction: column;
    align-items: center;
    justify-content: flex-end;
    padding-bottom: 12px;
    box-sizing: border-box;
    background: #535353;
}

.vthumb {
    position: absolute;
    top: 248px;
    left: 7px;
    width: 17px;
    height: 50px;
    border-radius: 9px;
    background: #757575;
}

/* status bar */
.status {
    flex: 1;
    display: flex;
    align-items: center;
    background: #535353;
    font-size: 21px;
    color: #e0e0e0;
}

.st-1 { margin-left: 25px; flex: none; }
.st-2 { margin-left: 26px; flex: none; }
.st-3 { margin-left: 28px; flex: none; }
.st-4 { margin-left: 29px; flex: none; }
.st-5 { margin-left: 33px; flex: none; }

.pagefield {
    margin-left: 27px;
    width: 177px;
    height: 31px;
    flex: none;
    box-sizing: border-box;
    border: 2px solid #6c6c6c;
    border-radius: 6px;
    background: #454545;
    display: flex;
    align-items: center;
    padding-left: 8px;
    justify-content: space-between;
    font-size: 20px;
    font-weight: 600;
    color: #f4f4f4;
}

.pf-drop {
    width: 34px;
    height: 100%;
    box-sizing: border-box;
    border-left: 2px solid #6c6c6c;
    display: flex;
    align-items: center;
    justify-content: center;
}

.profile {
    margin-left: 31px;
    width: 205px;
    flex: none;
}

.st-6 { margin-left: 0; }

.okdot {
    margin-left: 33px;
    width: 21px;
    height: 21px;
    flex: none;
    border-radius: 50%;
    background: #66a658;
}

.errs {
    margin-left: 10px;
    width: 126px;
    flex: none;
}

.st-7 { margin-left: 0; }

.hscroll {
    margin-left: 12px;
    flex: 1;
    height: 34px;
    display: flex;
    align-items: center;
    padding-left: 11px;
    background: #4f4f4f;
}

.hthumb {
    margin-left: 294px;
    width: 1057px;
    height: 27px;
    flex: none;
    border-radius: 14px;
    background: #6c6c6c;
}

.hscroll svg { flex: none; }
.hthumb + svg { margin-left: 16px; }
.splitbox { margin-left: 25px; }

/* panels */
.panels {
    flex: 1;
    min-width: 0;
    box-sizing: border-box;
    border-left: 5px solid #383838;
    background: #535353;
}

.dock-top {
    height: 24px;
    box-sizing: border-box;
    border-bottom: 2px solid #343434;
    background: #424242;
    display: flex;
    align-items: center;
    justify-content: flex-end;
    padding-right: 14px;
}

.panel {
    height: 504px;
    margin-bottom: 6px;
    display: flex;
    flex-direction: column;
    box-shadow: 0 2px 0 #343434;
    background: #535353;
}

.phead {
    height: 53px;
    flex: none;
    display: flex;
    align-items: center;
    justify-content: space-between;
    background: #424242;
    box-sizing: border-box;
    padding-right: 14px;
}

.ptab {
    height: 53px;
    box-sizing: border-box;
    background: #535353;
    display: flex;
    align-items: center;
    padding-left: 16px;
    font-size: 22.800px;
    font-weight: 700;
    color: #e8e8e8;
}

.pt-obj { width: 206px; }
.pt-par { width: 248px; }
.pt-chr { width: 242px; }

.updown { margin-right: 10px; flex: none; }
.pmenu { color: #bdbdbd; flex: none; }

.psub {
    height: 51px;
    flex: none;
    box-sizing: border-box;
    display: flex;
    align-items: center;
    padding: 3px 21px 0 11px;
    font-size: 21px;
    color: #f0f0f0;
}

.psub span { flex: 1; }
.pplus { margin-right: 35px; color: #bdbdbd; flex: none; }
.pbolt { color: #9c9c9c; flex: none; }

.plist {
    height: 350px;
    flex: none;
    box-sizing: border-box;
    margin: 0 4px 0 2px;
    display: flex;
    overflow: hidden;
}

.rows {
    flex: 1;
    min-width: 0;
}

.row {
    height: 44px;
    box-sizing: border-box;
    border-top: 2px solid #4a4a4a;
    padding: 0 26px 3px 68px;
    display: flex;
    align-items: center;
    justify-content: space-between;
    font-size: 20.500px;
    color: #ebebeb;
}

.rows-obj .row { padding-left: 75px; }

.row.sel {
    background: #536982;
    font-weight: 700;
    color: #fff;
}

.ptrack {
    position: relative;
    width: 24px;
    flex: none;
    display: flex;
    flex-direction: column;
    align-items: center;
    padding-top: 6px;
    box-sizing: border-box;
    background: #4a4a4a;
}

.track-d { margin-top: auto; margin-bottom: 6px; }

.pthumb {
    position: absolute;
    left: 2px;
    width: 20px;
    border-radius: 10px;
    background: #6e6e6e;
}

.th-obj { top: 25px; height: 160px; }
.th-par { top: 76px; height: 83px; }
.th-chr { top: 36px; height: 102px; }

.pfoot {
    flex: 1;
    display: flex;
    align-items: center;
    justify-content: flex-end;
    padding: 0 50px 0 10px;
    color: #bdbdbd;
}

.pfoot svg { flex: none; margin-right: 28px; }
.pfoot svg:last-child { margin-right: 0; }
.pfoot .tight { margin-right: 22px; }
.pfoot .wide { margin-right: 28px; }
.pfoot .newpg { margin-right: 35px; }
.pfoot .dimmer { color: #7a7a7a; }
.pfoot .cloud { margin-right: auto; }
.pfoot .mid-w { margin-right: 34px; }
```
